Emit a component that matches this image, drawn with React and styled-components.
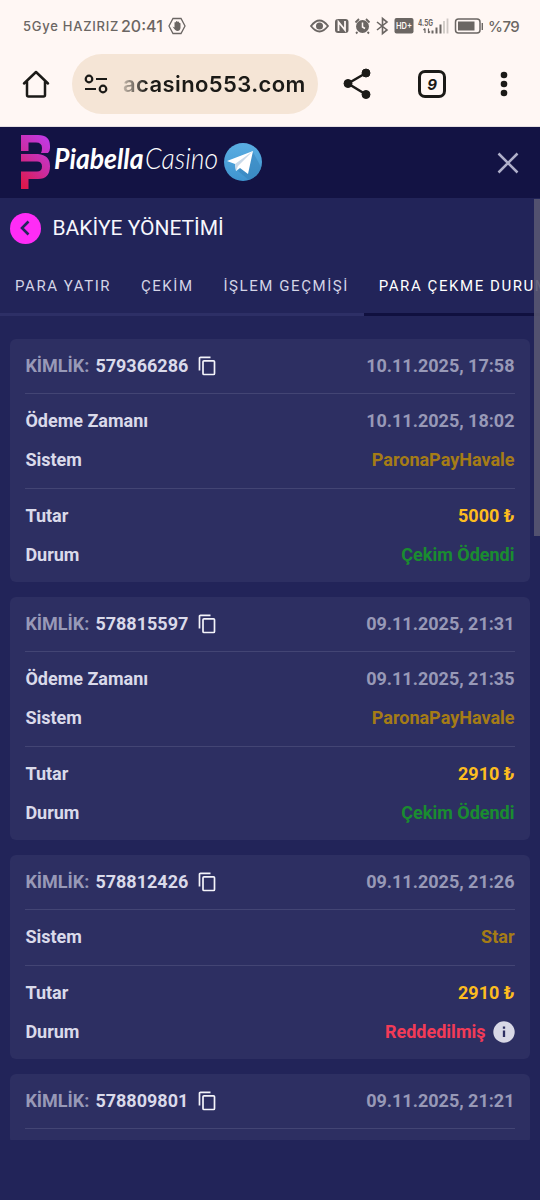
import styled, { createGlobalStyle } from "styled-components";

const transactions = [
  {
    id: "579366286",
    date: "10.11.2025, 17:58",
    paidAt: "10.11.2025, 18:02",
    system: "ParonaPayHavale",
    amount: "5000 ₺",
    status: "Çekim Ödendi",
  },
  {
    id: "578815597",
    date: "09.11.2025, 21:31",
    paidAt: "09.11.2025, 21:35",
    system: "ParonaPayHavale",
    amount: "2910 ₺",
    status: "Çekim Ödendi",
  },
  {
    id: "578812426",
    date: "09.11.2025, 21:26",
    system: "Star",
    amount: "2910 ₺",
    status: "Reddedilmiş",
    rejected: true,
  },
  {
    id: "578809801",
    date: "09.11.2025, 21:21",
  },
];

const tabs = ["PARA YATIR", "ÇEKİM", "İŞLEM GEÇMİŞİ", "PARA ÇEKME DURUMU"];

function StatusIcons() {
  return (
    <svg width="174" height="24" viewBox="309 14 174 24" fill="none" stroke="#6b6663" strokeWidth="1.8">
      <path d="M311 26Q319.500 15 328 26Q319.500 37 311 26Z" />
      <circle cx="319.500" cy="26" r="3.500" fill="#6b6663" stroke="none" />
      <rect x="335" y="19" width="13.500" height="14" rx="3" fill="#6b6663" stroke="none" />
      <path d="M338.500 31V22L345 30V21" stroke="#fff7f4" />
      <circle cx="362.500" cy="26.500" r="6.500" fill="#6b6663" stroke="none" />
      <path d="M355.500 22.500L359 19M366 19L369.500 22.500M357.500 32L356 33.500M367.500 32L369 33.500" />
      <path d="M362.500 22.500V27L365 28.500" stroke="#fff7f4" strokeWidth="1.500" />
      <path d="M377 22L387 30L382.500 33.500V18.500L387 22L377 30" strokeWidth="1.600" />
      <rect x="394.500" y="18" width="19" height="15.500" rx="2" fill="#6b6663" stroke="none" />
      <text x="396" y="29" fill="#fff7f4" stroke="none" fontSize="9" fontWeight="600" textLength="16" lengthAdjust="spacingAndGlyphs">HD+</text>
      <text x="418" y="25.500" fill="#6b6663" stroke="none" fontSize="8.500" fontWeight="700" textLength="15" lengthAdjust="spacingAndGlyphs">4.5G</text>
      <path d="M425 28.500V33M423.500 30L425 28.500M428.500 28.500V33M428.500 33L430 31.500" strokeWidth="1.200" />
      <path d="M432.500 30.500V33.500M436.500 27.500V33.500M440.500 24.500V33.500" strokeWidth="2" />
      <path d="M444 21V33.500M447.500 18.500V33.500" stroke="#cfc9c5" strokeWidth="1.800" />
      <rect x="455.500" y="19" width="24.500" height="14" rx="3" strokeWidth="1.500" />
      <rect x="458" y="21.500" width="16.500" height="9" fill="#6b6663" stroke="none" />
      <path d="M482.500 23V30" />
    </svg>
  );
}

function HandIcon() {
  return (
    <svg width="18" height="18" viewBox="0 0 18 18" fill="none" stroke="#6b6663" strokeWidth="1.300">
      <path d="M5 1.500H13L17 9L13 16.500H5L1 9Z" />
      <path
        d="M4.500 9.500L6.500 10.500V5.500Q7.200 4.500 7.900 5.500V4.500Q8.700 3.500 9.500 4.500V5Q10.300 4 11.100 5V6Q12 5.500 12.500 6.500V11Q12 14 9.500 14Q7.500 14 4.500 9.500Z"
        fill="#6b6663"
        stroke="none"
      />
    </svg>
  );
}

function HomeIcon() {
  return (
    <svg width="28" height="28" viewBox="0 0 28 28" fill="none" stroke="#1b1a17" strokeWidth="2.500" strokeLinecap="round" strokeLinejoin="round">
      <path d="M2 13.500L14 2L26 13.500M5 11.500V25Q5 26.500 6.500 26.500H21.500Q23 26.500 23 25V11.500" />
    </svg>
  );
}

function SiteSettingsIcon() {
  return (
    <svg width="24" height="20" viewBox="0 0 24 20" fill="none" stroke="#1b1a17" strokeWidth="2.200">
      <circle cx="5" cy="5" r="3.300" />
      <path d="M12 5H23M1 15H12" />
      <circle cx="19" cy="15" r="3.300" />
    </svg>
  );
}

function ShareIcon() {
  return (
    <svg width="28" height="32" viewBox="0 0 28 32" fill="#1b1a17" stroke="#1b1a17">
      <path d="M23 5L5 15.500L23 26.500" fill="none" strokeWidth="2.500" />
      <circle cx="23" cy="5" r="4" />
      <circle cx="5" cy="15.500" r="4" />
      <circle cx="23" cy="26.500" r="4" />
    </svg>
  );
}

function Logo() {
  return (
    <svg width="246" height="60" viewBox="18 133 246 60" role="img" aria-label="PiabellaCasino">
      <defs>
        <linearGradient id="mark" x1="0.700" y1="0" x2="0.200" y2="1">
          <stop offset="0" stopColor="#c338e0" />
          <stop offset="0.500" stopColor="#cb2ca0" />
          <stop offset="1" stopColor="#e0184c" />
        </linearGradient>
        <linearGradient id="telegram" x1="0" y1="0" x2="0" y2="1">
          <stop offset="0" stopColor="#5aaee2" />
          <stop offset="1" stopColor="#3f94cf" />
        </linearGradient>
      </defs>
      <path
        fill="url(#mark)"
        d="M21 135H38Q50 135 50 146V148Q50 151 48 153H41Q42 151 42 148Q42 142.500 36 142.500H28.500V151H21ZM21 154H38Q50 155 50 166Q50 179 38 179H28.500V189H21V171.500H37Q42 171.500 42 166.500Q42 161.500 37 161.500H21Z"
      />
      <text x="54" y="168.500" fill="#fff" fontSize="29" fontWeight="700" fontStyle="italic" textLength="89.500" lengthAdjust="spacingAndGlyphs">Piabella</text>
      <text x="145" y="168.500" fill="#fff" fontSize="29" fontWeight="300" fontStyle="italic" textLength="73" lengthAdjust="spacingAndGlyphs">Casino</text>
      <circle cx="243" cy="162" r="19" fill="url(#telegram)" />
      <path d="M238 171L249 180Q259 176 261 167L253 152Z" fill="#3480b8" opacity="0.5" />
      <path d="M227 161L253 151L248 174L240 168L236 171L235 164Z" fill="#fff" />
      <path d="M235 164L253 151L238 166L236 171Z" fill="#c9d9e8" />
    </svg>
  );
}

function CopyIcon() {
  return (
    <svg width="18" height="20" viewBox="0 0 18 20" fill="none" stroke="#f4f4fa" strokeWidth="1.700">
      <path d="M1.500 14.500V2.300Q1.500 1.300 2.500 1.300H12.500" />
      <rect x="5" y="4.800" width="11.500" height="13.700" rx="1" />
    </svg>
  );
}

function InfoIcon() {
  return (
    <svg width="22" height="22" viewBox="0 0 22 22">
      <circle cx="11" cy="11" r="10.700" fill="#d8d8e6" />
      <path d="M11 9.500V16M11 5.500V7.800" stroke="#2d2f62" strokeWidth="2.300" />
    </svg>
  );
}

function TransactionCard({ item }) {
  return (
    <Card>
      <CardHeader>
        <Muted>KİMLİK:</Muted>
        <TransactionId>{item.id}</TransactionId>
        <CopyIcon />
        <HeaderDate>{item.date}</HeaderDate>
      </CardHeader>
      <Section>
        {item.paidAt && (
          <Row>
            <span>Ödeme Zamanı</span>
            <Muted>{item.paidAt}</Muted>
          </Row>
        )}
        {item.system && (
          <Row>
            <span>Sistem</span>
            <Value $color="#a57c16">{item.system}</Value>
          </Row>
        )}
      </Section>
      {item.amount && (
        <Section>
          <Row>
            <span>Tutar</span>
            <Value $color="#fdbd1f">{item.amount}</Value>
          </Row>
          <Row>
            <span>Durum</span>
            <Value $color={item.rejected ? "#f23b57" : "#1a8c30"}>
              {item.status}
              {item.rejected && <InfoIcon />}
            </Value>
          </Row>
        </Section>
      )}
    </Card>
  );
}

export default function App() {
  return (
    <>
      <GlobalStyle />
      <Screen>
        <StatusBar>
          <Carrier>5Gye HAZIRIZ</Carrier>
          <Clock>20:41</Clock>
          <HandIcon />
          <StatusRight>
            <StatusIcons />
            <Battery>%79</Battery>
          </StatusRight>
        </StatusBar>
        <BrowserBar>
          <HomeIcon />
          <AddressBar>
            <SiteSettingsIcon />
            <Url>acasino553.com</Url>
          </AddressBar>
          <BrowserActions>
            <ShareIcon />
            <TabCount>9</TabCount>
            <MenuDots width="8" height="26" viewBox="0 0 8 26" fill="#1b1a17">
              <circle cx="4" cy="4" r="3.300" />
              <circle cx="4" cy="13" r="3.300" />
              <circle cx="4" cy="22" r="3.300" />
            </MenuDots>
          </BrowserActions>
        </BrowserBar>
        <SiteHeader>
          <Logo />
          <svg width="22" height="22" viewBox="0 0 22 22" stroke="#b0b0ca" strokeWidth="2.500">
            <path d="M1.500 1.500L20.500 20.500M20.500 1.500L1.500 20.500" />
          </svg>
        </SiteHeader>
        <Content>
          <TitleRow>
            <BackButton>
              <svg width="10" height="16" viewBox="0 0 10 16" fill="none" stroke="#25265c" strokeWidth="2.600">
                <path d="M8.500 1.500L2 8L8.500 14.500" />
              </svg>
            </BackButton>
            <Title>BAKİYE YÖNETİMİ</Title>
          </TitleRow>
          <Tabs>
            {tabs.map((tab, index) => (
              <Tab key={tab} $active={index === 3}>
                {tab}
              </Tab>
            ))}
          </Tabs>
          <List>
            {transactions.map((item) => (
              <TransactionCard key={item.id} item={item} />
            ))}
          </List>
          <Scrollbar />
        </Content>
      </Screen>
    </>
  );
}

const GlobalStyle = createGlobalStyle`
  * {
    box-sizing: border-box;
  }

  body {
    margin: 0;
    font-family: Roboto, "Liberation Sans", sans-serif;
    background: #222459;
  }

  svg {
    display: block;
    flex-shrink: 0;
  }
`;

const Screen = styled.div`
  width: 540px;
  height: 1200px;
  overflow: hidden;
  display: flex;
  flex-direction: column;
  background: #222459;
`;

const StatusBar = styled.div`
  height: 52px;
  padding: 0 21px 0 23px;
  display: flex;
  align-items: center;
  background: #fff7f4;
  color: #6b6663;
  font-family: Inter, Roboto, sans-serif;
  font-weight: 500;
`;

const Carrier = styled.span`
  width: 98px;
  font-size: 13px;
  letter-spacing: 0.75px;
  white-space: nowrap;
`;

const Clock = styled.span`
  width: 47px;
  font-size: 16px;
  white-space: nowrap;
`;

const StatusRight = styled.div`
  margin-left: auto;
  display: flex;
  align-items: center;
  gap: 5px;
`;

const Battery = styled.span`
  width: 31px;
  font-size: 15px;
  letter-spacing: -0.5px;
`;

const BrowserBar = styled.div`
  height: 75px;
  padding: 0 32px 10px 22px;
  display: flex;
  align-items: center;
  background: #fff7f4;
  border-bottom: 1px solid #e5dfe2;
`;

const AddressBar = styled.div`
  width: 246px;
  height: 60px;
  margin-left: 22px;
  padding-left: 12px;
  display: flex;
  align-items: center;
  gap: 15px;
  border-radius: 30px;
  background: #f5e5d6;
`;

const Url = styled.span`
  font-family: Inter, Roboto, sans-serif;
  font-size: 22px;
  font-weight: 600;
  letter-spacing: 0.4px;
  background: linear-gradient(90deg, #c4b7aa 0, #1b1a17 24px);
  background-clip: text;
  color: transparent;
`;

const BrowserActions = styled.div`
  margin-left: 25px;
  flex: 1;
  display: flex;
  align-items: center;
`;

const TabCount = styled.div`
  width: 28px;
  height: 28px;
  margin-left: 47px;
  display: flex;
  align-items: center;
  justify-content: center;
  border: 3px solid #1b1a17;
  border-radius: 7px;
  color: #1b1a17;
  font: italic 700 15px Inter, sans-serif;
`;

const MenuDots = styled.svg`
  margin-left: auto;
`;

const SiteHeader = styled.header`
  height: 71px;
  padding: 0 21px 0 18px;
  display: flex;
  align-items: center;
  justify-content: space-between;
  background: #131344;
  font-family: Lato, Inter, sans-serif;
`;

const Content = styled.main`
  position: relative;
  height: 1002px;
`;

const TitleRow = styled.div`
  height: 60px;
  padding-left: 10px;
  display: flex;
  align-items: center;
  gap: 11.5px;
`;

const BackButton = styled.button`
  width: 31px;
  height: 31px;
  padding: 0 2px 0 0;
  display: flex;
  align-items: center;
  justify-content: center;
  border: none;
  border-radius: 50%;
  background: #ff2cf6;
`;

const Title = styled.h1`
  margin: 0;
  color: #f7f7fc;
  font-size: 21px;
  font-weight: 400;
`;

const Tabs = styled.nav`
  height: 58px;
  display: flex;
  overflow: hidden;
`;

const Tab = styled.div`
  flex-shrink: 0;
  padding: 0 14.8px 0 15px;
  border-bottom: 3px solid ${({ $active }) => ($active ? "#10103f" : "#2d2f66")};
  color: ${({ $active }) => ($active ? "#ffffff" : "#d4d4e6")};
  font-size: 15px;
  line-height: 56px;
  letter-spacing: 1.57px;
`;

const List = styled.div`
  height: 801px;
  margin-top: 23px;
  padding: 0 10.5px 0 10.4px;
  display: flex;
  flex-direction: column;
  gap: 15px;
  overflow: hidden;
`;

const Card = styled.article`
  flex-shrink: 0;
  padding: 0 15px;
  border-radius: 6px;
  background: #2d2f62;
  color: #dadaea;
  font-size: 18px;
  font-weight: 700;
`;

const CardHeader = styled.div`
  height: 55px;
  padding-bottom: 1px;
  display: flex;
  align-items: center;
  border-bottom: 1px solid #434574;
`;

const Muted = styled.span`
  color: #9899b7;
`;

const TransactionId = styled.span`
  margin: 0 10px 0 6px;
`;

const HeaderDate = styled(Muted)`
  margin-left: auto;
`;

const Section = styled.div`
  padding: 7px 0 8px;

  &:not(:last-child) {
    padding-bottom: 9px;
    border-bottom: 1px solid #434574;
  }
`;

const Row = styled.div`
  height: 39px;
  display: flex;
  align-items: center;
  justify-content: space-between;
`;

const Value = styled.span`
  display: flex;
  align-items: center;
  gap: 7px;
  color: ${({ $color }) => $color};
`;

const Scrollbar = styled.div`
  position: absolute;
  top: 1px;
  right: 0;
  width: 6px;
  height: 337px;
  background: rgba(88, 87, 113, 0.9);
`;
